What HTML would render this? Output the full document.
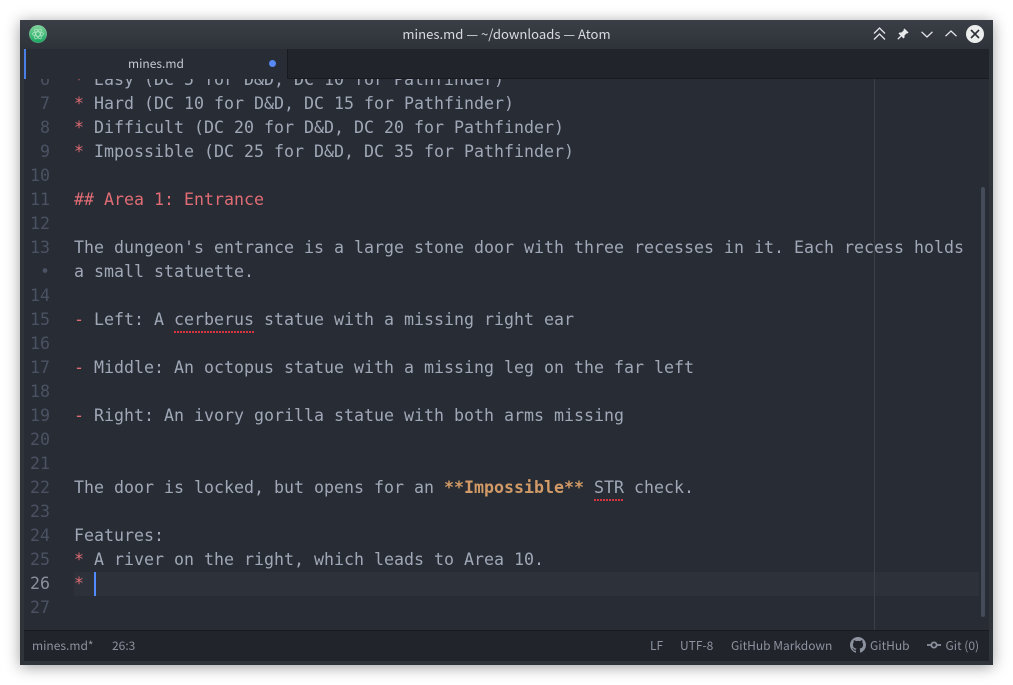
<!DOCTYPE html>
<html><head><meta charset="utf-8">
<style>
html,body{margin:0;padding:0;background:#fff;width:1013px;height:685px;overflow:hidden}
*{box-sizing:border-box}
.win{position:absolute;left:20px;top:20px;width:973px;height:645px;background:#2f343b;box-shadow:0 2px 14px rgba(0,0,0,.38);overflow:hidden}
.ui{font-family:"Noto Sans CJK SC","DejaVu Sans",sans-serif}
.title{position:absolute;left:0;top:0;width:973px;height:29px;background:linear-gradient(#3a3f47,#2e3239)}
.ttext{position:absolute;left:0;right:0;top:4px;text-align:center;font-size:13.1px;line-height:19px;color:#d8dbe0}
.tabs{position:absolute;left:4px;top:29px;width:965px;height:30px;background:#21242b;border-bottom:1px solid #181a1f}
.tab{position:absolute;left:0;top:0;width:264px;height:30px;background:#282c34;border-left:2px solid #4a7fe8;border-right:1px solid #181a1f}
.tabt{position:absolute;left:102px;top:5px;font-size:12px;line-height:19px;color:#c5c9d0}
.dot{position:absolute;left:243px;top:11px;width:7px;height:7px;border-radius:50%;background:#568af2}
.ed{position:absolute;left:4px;top:59px;width:965px;height:551px;background:#282c34;overflow:hidden}
.hl{position:absolute;left:50px;top:493px;width:905px;height:24px;background:#2c313a}
.wrap{position:absolute;left:850px;top:0;width:1px;height:551px;background:#3c4049}
.sb{position:absolute;left:957px;top:108px;width:4px;height:430px;border-radius:2px;background:#454c59}
.cur{position:absolute;left:70px;top:493px;width:2px;height:24px;background:#528bff}
.l,.n{position:absolute;font-family:"DejaVu Sans Mono","Liberation Mono",monospace;font-size:16.62px;line-height:24px;white-space:pre;height:24px}
.l{left:50px;color:#a0a8b7}
.n{left:0;width:26px;text-align:right;color:#4b5263}
.n.c{color:#8a909c}
.r{color:#e06c75}
.b{color:#d19a66;font-weight:bold}
.sp{background-image:linear-gradient(90deg,#d9343f 2px,transparent 2px);background-size:3px 2px;background-repeat:repeat-x;background-position:0 23px;display:inline-block;height:26px;vertical-align:top}
.status{position:absolute;left:4px;top:610px;width:965px;height:31px;background:#21242b;border-top:1px solid #181a1f;font-size:12px;color:#8c929e}
.s{position:absolute;top:6px;line-height:18px;white-space:pre}
svg{position:absolute;overflow:visible}
</style></head><body>
<div class="win">
 <div class="title">
  <svg style="left:9px;top:5px" width="18" height="18" viewBox="0 0 18 18">
   <defs><linearGradient id="g" x1="0" y1="0" x2="0" y2="1"><stop offset="0" stop-color="#7fd49a"/><stop offset="1" stop-color="#17a660"/></linearGradient></defs>
   <circle cx="9" cy="9" r="8.8" fill="url(#g)" stroke="#cfe8d8" stroke-opacity=".5" stroke-width=".4"/>
   <g fill="none" stroke="#b5e8c8" stroke-width=".7"><ellipse cx="9" cy="9" rx="5.5" ry="2.2"/><ellipse cx="9" cy="9" rx="5.5" ry="2.2" transform="rotate(60 9 9)"/><ellipse cx="9" cy="9" rx="5.5" ry="2.2" transform="rotate(120 9 9)"/></g>
  </svg>
  <div class="ttext ui">mines.md — ~/downloads — Atom</div>
  <svg style="left:853px;top:7px" width="13" height="14" viewBox="0 0 13 14" fill="none" stroke="#e4e6e9" stroke-width="1.3"><path d="M1 6.5 6.5 1 12 6.5M1 12.5 6.5 7 12 12.5"/></svg>
  <svg style="left:877px;top:8px" width="12" height="12" viewBox="0 0 12 12"><path d="M7.5 .5 11.5 4.5 10.5 5.5 9.7 5.2 7.5 7.5 7.5 9.5 6.5 10.5 1.5 5.5 2.5 4.5 4.5 4.5 6.8 2.3 6.5 1.5Z" fill="#e8eaec"/><path d="M4 8 .8 11.2" stroke="#e8eaec" stroke-width="1.3"/></svg>
  <svg style="left:901px;top:11px" width="12" height="7" viewBox="0 0 12 7" fill="none" stroke="#e4e6e9" stroke-width="1.3"><path d="M.5 .8 6 6 11.5 .8"/></svg>
  <svg style="left:925px;top:10px" width="12" height="7" viewBox="0 0 12 7" fill="none" stroke="#e4e6e9" stroke-width="1.3"><path d="M.5 6.2 6 1 11.5 6.2"/></svg>
  <svg style="left:946px;top:5px" width="18" height="18" viewBox="0 0 18 18"><circle cx="9" cy="9" r="9" fill="#eceded"/><path d="M5 5 13 13M13 5 5 13" stroke="#2b2f36" stroke-width="1.6"/></svg>
 </div>
 <div class="tabs">
  <div class="tab ui"><div class="tabt">mines.md</div><div class="dot"></div></div>
 </div>
 <div class="ed">
  <div class="hl"></div>
  <div class="wrap"></div>
  <div class="sb"></div>
  <div class="n" style="top:-11px">6</div><div class="l" style="top:-11px"><span class="r">*</span> Easy (DC 5 for D&amp;D, DC 10 for Pathfinder)</div>
  <div class="n" style="top:13px">7</div><div class="l" style="top:13px"><span class="r">*</span> Hard (DC 10 for D&amp;D, DC 15 for Pathfinder)</div>
  <div class="n" style="top:37px">8</div><div class="l" style="top:37px"><span class="r">*</span> Difficult (DC 20 for D&amp;D, DC 20 for Pathfinder)</div>
  <div class="n" style="top:61px">9</div><div class="l" style="top:61px"><span class="r">*</span> Impossible (DC 25 for D&amp;D, DC 35 for Pathfinder)</div>
  <div class="n" style="top:85px">10</div>
  <div class="n" style="top:109px">11</div><div class="l r" style="top:109px">## Area 1: Entrance</div>
  <div class="n" style="top:133px">12</div>
  <div class="n" style="top:157px">13</div><div class="l" style="top:157px">The dungeon's entrance is a large stone door with three recesses in it. Each recess holds</div>
  <div class="n" style="top:181px">•</div><div class="l" style="top:181px">a small statuette.</div>
  <div class="n" style="top:205px">14</div>
  <div class="n" style="top:229px">15</div><div class="l" style="top:229px"><span class="r">-</span> Left: A <span class="sp">cerberus</span> statue with a missing right ear</div>
  <div class="n" style="top:253px">16</div>
  <div class="n" style="top:277px">17</div><div class="l" style="top:277px"><span class="r">-</span> Middle: An octopus statue with a missing leg on the far left</div>
  <div class="n" style="top:301px">18</div>
  <div class="n" style="top:325px">19</div><div class="l" style="top:325px"><span class="r">-</span> Right: An ivory gorilla statue with both arms missing</div>
  <div class="n" style="top:349px">20</div>
  <div class="n" style="top:373px">21</div>
  <div class="n" style="top:397px">22</div><div class="l" style="top:397px">The door is locked, but opens for an <span class="b">**Impossible**</span> <span class="sp">STR</span> check.</div>
  <div class="n" style="top:421px">23</div>
  <div class="n" style="top:445px">24</div><div class="l" style="top:445px">Features:</div>
  <div class="n" style="top:469px">25</div><div class="l" style="top:469px"><span class="r">*</span> A river on the right, which leads to Area 10.</div>
  <div class="n c" style="top:493px">26</div><div class="l" style="top:493px"><span class="r">*</span></div>
  <div class="n" style="top:517px">27</div>
  <div class="cur"></div>
 </div>
 <div class="status ui">
  <div class="s" style="left:8px">mines.md*</div>
  <div class="s" style="left:88px">26:3</div>
  <div class="s" style="left:626px">LF</div>
  <div class="s" style="left:656px">UTF-8</div>
  <div class="s" style="left:707px">GitHub Markdown</div>
  <svg style="left:826px;top:6px" width="16" height="16" viewBox="0 0 16 16"><path fill="#8c929e" d="M8 0C3.58 0 0 3.58 0 8c0 3.54 2.29 6.53 5.47 7.59.4.07.55-.17.55-.38 0-.19-.01-.82-.01-1.49-2.01.37-2.53-.49-2.69-.94-.09-.23-.48-.94-.82-1.13-.28-.15-.68-.52-.01-.53.63-.01 1.08.58 1.23.82.72 1.21 1.87.87 2.33.66.07-.52.28-.87.51-1.07-1.78-.2-3.64-.89-3.64-3.95 0-.87.31-1.59.82-2.15-.08-.2-.36-1.02.08-2.12 0 0 .67-.21 2.2.82.64-.18 1.32-.27 2-.27s1.36.09 2 .27c1.53-1.04 2.2-.82 2.2-.82.44 1.1.16 1.92.08 2.12.51.56.82 1.27.82 2.15 0 3.07-1.87 3.75-3.65 3.95.29.25.54.73.54 1.48 0 1.07-.01 1.93-.01 2.2 0 .21.15.46.55.38A8.01 8.01 0 0 0 16 8c0-4.42-3.58-8-8-8z"/></svg>
  <div class="s" style="left:846px">GitHub</div>
  <svg style="left:903px;top:9px" width="14" height="10" viewBox="0 0 14 10" fill="none" stroke="#8c929e" stroke-width="1.8"><circle cx="7" cy="5" r="2.6"/><path d="M0 5H4.2M9.8 5H14"/></svg>
  <div class="s" style="left:921.5px">Git (0)</div>
 </div>
</div>
</body></html>
